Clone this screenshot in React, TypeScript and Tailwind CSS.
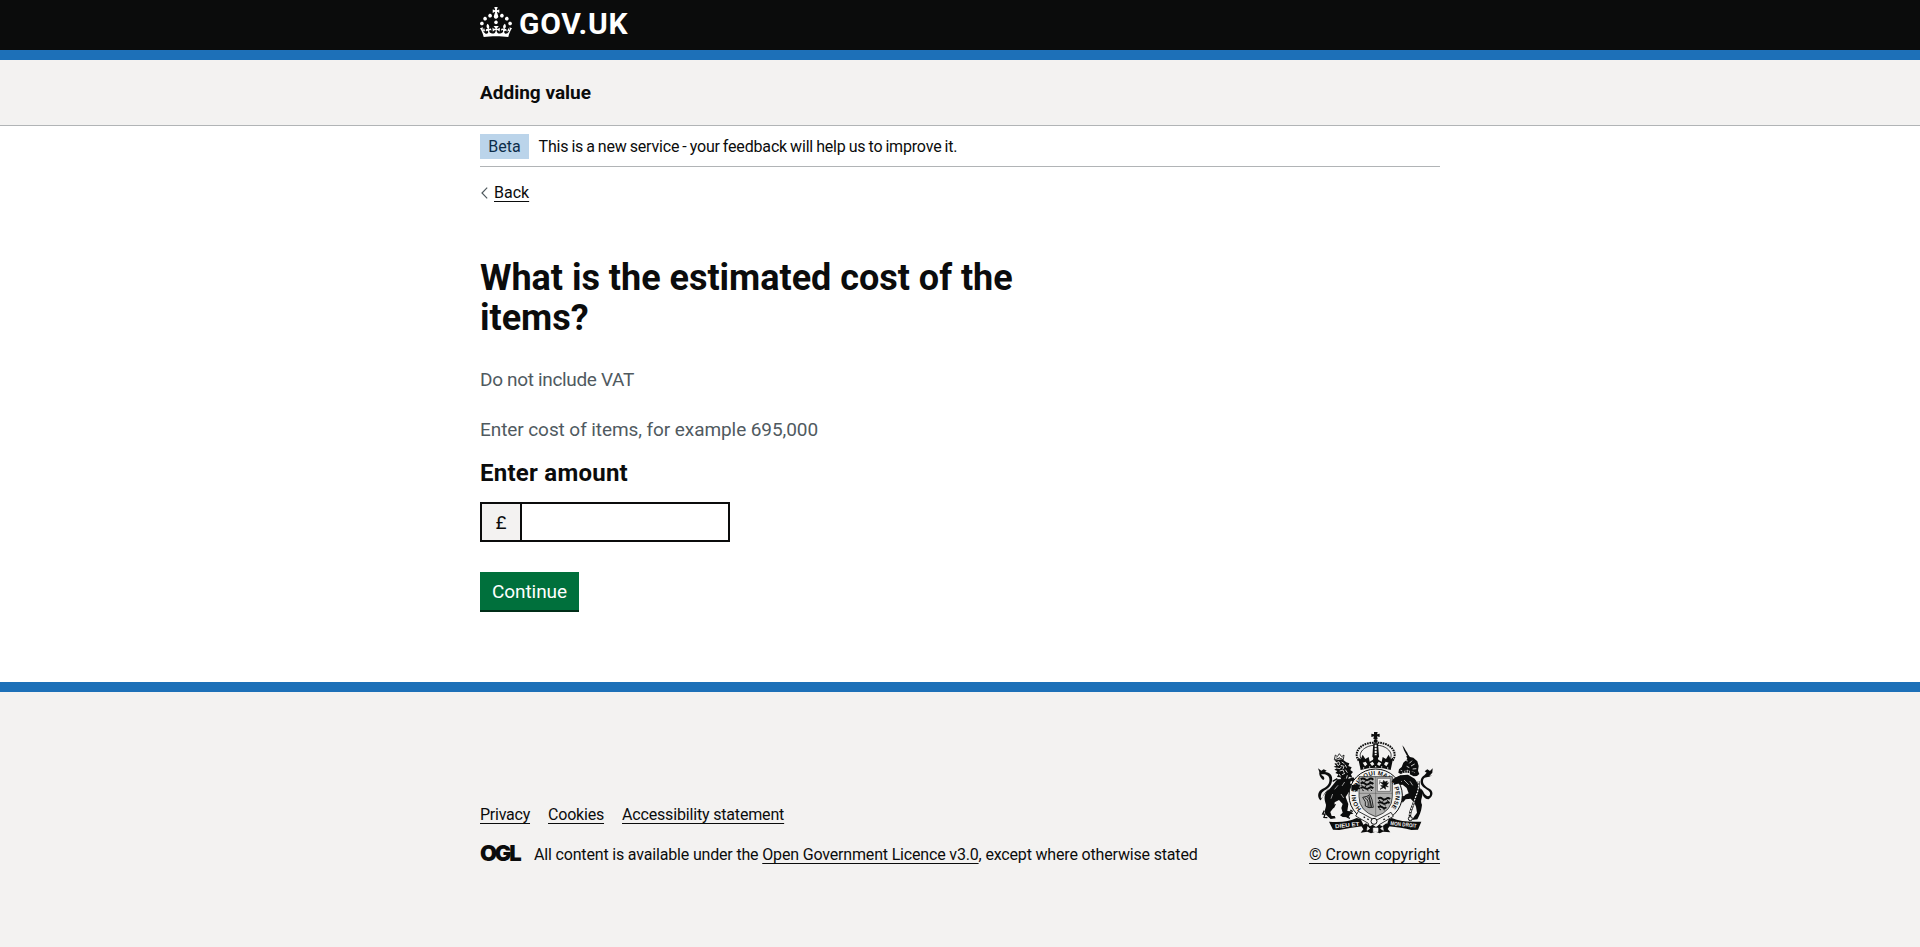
import type { ReactNode } from "react";

function HeaderCrown() {
  return (
    <svg viewBox="0 0 32 30" width="32" height="30" fill="currentColor" className="shrink-0">
      <path d="M22.6 10.4c-1 .4-2-.1-2.4-1-.4-.9.1-2 1-2.4.9-.4 2 .1 2.4 1s-.1 2-1 2.4m-5.9 6.7c-.9.4-2-.1-2.4-1-.4-.9.1-2 1-2.4.9-.4 2 .1 2.4 1s-.1 2-1 2.4m10.8-3.7c-1 .4-2-.1-2.4-1-.4-.9.1-2 1-2.4.9-.4 2 .1 2.4 1s0 2-1 2.4m3.3 4.8c-1 .4-2-.1-2.4-1-.4-.9.1-2 1-2.4.9-.4 2 .1 2.4 1s-.1 2-1 2.4M17 4.7l2.3 1.2V2.5l-2.3.7-.2-.2.9-3h-3.4l.9 3-.2.2c-.1.1-2.3-.7-2.3-.7v3.4L15 4.7c.1.1.1.2.2.2l-1.3 4c-.1.2-.1.4-.1.6 0 1.1.8 2 1.9 2.2h.7c1-.2 1.9-1.1 1.9-2.1 0-.2 0-.4-.1-.6l-1.3-4c-.1-.2 0-.2.1-.3m-7.6 5.7c.9.4 2-.1 2.4-1 .4-.9-.1-2-1-2.4-.9-.4-2 .1-2.4 1s0 2 1 2.4m-5 3c.9.4 2-.1 2.4-1 .4-.9-.1-2-1-2.4-.9-.4-2 .1-2.4 1s.1 2 1 2.4m-3.2 4.8c.9.4 2-.1 2.4-1 .4-.9-.1-2-1-2.4-.9-.4-2 .1-2.4 1s0 2 1 2.4m14.8 11c4.4 0 8.6.3 12.3.8 1.1-4.5 2.4-7 3.7-8.8l-2.5-.9c.2 1.3.3 1.9 0 2.7-.4-.4-.8-1.1-1.1-2.3l-1.2 4c.7-.5 1.3-.8 2-.9-1.1 2.5-2.6 3.1-3.5 3-1.1-.2-1.7-1.2-1.5-2.1.3-1.2 1.5-1.5 2.1-.1 1.1-2.3-.8-3-2-2.3 1.9-1.9 2.1-3.5.6-5.6-2.1 1.6-2.1 3.2-1.2 5.5-1.2-1.4-3.2-.6-2.5 1.6.9-1.4 2.1-.5 1.9.8-.2 1.1-1.7 2.1-3.5 1.9-2.7-.2-2.9-2.1-2.9-3.6.7-.1 1.9.5 2.9 1.9l.4-4.3c-1.1 1.1-2.1 1.4-3.2 1.4.4-1.2 2.1-3 2.1-3h-5.4s1.7 1.9 2.1 3c-1.1 0-2.1-.2-3.2-1.4l.4 4.3c1-1.4 2.2-2 2.9-1.9-.1 1.5-.2 3.4-2.9 3.6-1.9.2-3.4-.8-3.5-1.9-.2-1.3 1-2.2 1.9-.8.7-2.3-1.2-3-2.5-1.6.9-2.2.9-3.9-1.2-5.5-1.5 2-1.3 3.7.6 5.6-1.2-.7-3.1 0-2 2.3.6-1.4 1.8-1.1 2.1.1.2.9-.3 1.9-1.5 2.1-.9.2-2.4-.5-3.5-3 .6 0 1.2.3 2 .9l-1.2-4c-.3 1.1-.7 1.9-1.1 2.3-.3-.8-.2-1.4 0-2.7l-2.9.9C1.3 23 2.6 25.5 3.7 30c3.7-.5 7.9-.8 12.3-.8" />
    </svg>
  );
}

function RoyalArms() {
  const ink = "#0b0c0c";
  const paper = "#f3f2f1";
  return (
    <svg viewBox="75 30 360 318" width="120" height="106" fill={ink} stroke="none">
      <defs>
        <path id="garter" d="M214 267 A60 60 0 1 1 300 267" />
      </defs>

      {/* St Edward's crown */}
      <path d="M252 36h11l-2 7 8-2v10l-8-2 2 8h-13l2-8-8 2V41l8 2z" />
      <circle cx="257" cy="63" r="6" />
      <path d="M206 122C186 92 220 66 254 68" fill="none" stroke={ink} strokeWidth="6" strokeDasharray="5 2.5" />
      <path d="M308 122C328 92 294 66 260 68" fill="none" stroke={ink} strokeWidth="6" strokeDasharray="5 2.5" />
      <path d="M214 118C202 98 224 78 250 76M300 118C312 98 290 78 264 76" fill="none" stroke={ink} strokeWidth="2.5" />
      <path d="M250 70h14l3 40-10 12-10-12z" />
      <path d="M257 74v34" stroke={paper} strokeWidth="6" strokeDasharray="7 2" />
      <path d="M204 112l8 6 6-14 8 13 10-6 3 14 10-6 4-13h8l4 13 10 6 3-14 10 6 8-13 6 14 8-6-8 38q-45-14-90 0z" />
      <g fill={paper}>
        <path d="M218 128l9-3 5 8-7 6zM240 130l8-5 5 8-7 5zM274 130l-8-5-5 8 7 5zM296 128l-9-3-5 8 7 6z" />
        <circle cx="221" cy="144" r="2" /><circle cx="239" cy="141" r="2" /><circle cx="257" cy="140" r="2" /><circle cx="275" cy="141" r="2" /><circle cx="293" cy="144" r="2" />
      </g>

      {/* Lion */}
      <path d="M133 119l3-14 6 5 6-9 7 9 7-5-2 14q-14-5-27 0z" fill="none" stroke={ink} strokeWidth="2.5" />
      <path d="M139 113l5 4 4-5 5 5 5-4" fill="none" stroke={ink} strokeWidth="2" />
      <path d="M133 121l26-2 10 8 9 3-3 8 10 4-4 8 8 6-6 7 4 10-10-3-4 12-9-6-9 5-4-9-10-1 4-8-9-4 6-6-9-4 8-5-10-4 8-3-6-6 8-3z" />
      <path d="M139 128l8-3 3 7-6 5zM155 126l8 5M140 144l10 2 4-6M152 136l10 3-3 8M165 134l5 9M149 153l10-3 3 8M166 149l6 9M156 164l9-4M172 166l-3 10M147 162l5 7" fill="none" stroke={paper} strokeWidth="2.5" />
      <path d="M142 178C132 192 126 198 118 208C100 220 102 238 108 254C108 268 100 274 108 284L122 297L137 295L134 288L125 288L121 276L132 262L134 247L147 240L158 252L154 264L158 278L150 286L158 291L176 292L181 283L190 281L182 274L172 273L175 252L167 231L178 214L188 217L195 209L205 215L211 206L203 199L192 200L180 190L183 182L194 190L205 192L208 184L197 182L190 172L176 176Z" />
      <path d="M118 205C96 222 96 245 90 240C80 228 84 212 98 206C112 200 120 190 118 176C117 166 104 160 93 164C103 169 106 176 100 180C94 176 86 166 88 156L84 145L94 152L101 148L110 152L105 156C120 156 129 168 126 182C124 199 112 206 102 212C92 219 92 228 93 236Z" />
      <path d="M103 272l-5 10 7 1-3 9 10 1M181 270l7 5M170 291l10 4M128 184l14-8M136 252l-6 12" fill="none" stroke={ink} strokeWidth="4" />
      <path d="M144 196l-10 12M164 186l-8 12M128 222l-5 14M153 222l8 12" stroke={paper} strokeWidth="1.8" />

      {/* Unicorn */}
      <path d="M337 76L343 83L347 91L352 98L356 108L350 106L346 98L342 91Z" />
      <path d="M354 104l6 7 10 2 12 11 4 14-2 14 4 10-7 6-10 1-12-6 3-9-10-5-10 4-10 9-7-4 2-10 8-7 5-13 12-11-3-8z" />
      <path d="M346 121l7 2M366 122l-8 8M374 132l-11 6M379 146l-11 1M332 151l5 2M350 139l8 4M374 158l-9-3" stroke={paper} strokeWidth="2.5" />
      <path d="M332 158q24-10 48 8" fill="none" stroke={ink} strokeWidth="7" strokeDasharray="5 2" />
      <path d="M332 166L354 164L374 176C384 188 385 202 397 214C401 230 388 240 396 254C394 270 392 280 382 298L366 300L372 290L381 278L378 260L373 248L362 236L347 238L338 248L334 238L346 224L356 220L350 204L338 194L329 195L319 206L309 207L314 196L309 187L310 176Z" />
      <path d="M340 228l-10 18" fill="none" stroke={ink} strokeWidth="6" />
      <path d="M342 180l14 14M360 184l8 12M326 181l10 4" stroke={paper} strokeWidth="2" />
      <path d="M386 184C388 214 376 228 372 246C368 262 358 276 360 290" fill="none" stroke={ink} strokeWidth="7" />
      <path d="M386 184C388 214 376 228 372 246C368 262 358 276 360 290" fill="none" stroke={paper} strokeWidth="3.5" strokeDasharray="6 3" />
      <path d="M391 211C400 222 398 238 416 238C433 226 430 210 414 204C404 198 396 190 400 178C404 170 414 174 427 166L418 168L427 158L428 145L420 153L412 148L404 154L410 158L403 166C390 173 390 189 395 196C402 206 417 210 420 218C422 228 414 232 408 226C400 220 401 212 391 205Z" />

      {/* Garter */}
      <ellipse cx="257" cy="226" rx="80" ry="79" fill={paper} stroke={ink} strokeWidth="3" />
      <text fontFamily="Liberation Sans, sans-serif" fontSize="18" fontWeight="700" letterSpacing="0.8">
        <textPath href="#garter">HONI SOIT QUI MAL Y PENSE</textPath>
      </text>

      {/* Quartered shield */}
      <path d="M207 170h100v60q0 43-50 60q-50-17-50-60z" fill="#b1b1b0" stroke={ink} strokeWidth="2" />
      <path d="M262 175h39v39h-39z" fill={paper} stroke="#505050" strokeWidth="2" />
      <path d="M212 178q7-5 13 0t12 0t13 1M212 191q7-5 13 0t12 0t13 1M212 204q7-5 13 0t12 0t13 1M264 236q7-5 13 0t12 0t11 1M264 249q7-5 13 0t12 0t9 1M264 262q7-5 13 0t12 0" fill="none" stroke={ink} strokeWidth="6" />
      <path d="M214 182l5 5M227 181l-3 6M238 183l6 4M214 196l6 4M229 195l-3 6M240 196l5 5M216 209l5 3M230 208l5 4M242 209l4 4M267 240l5 4M281 240l-3 5M291 241l5 4M268 254l5 3M282 253l4 4M267 266l6 4M281 266l2 5" fill="none" stroke={ink} strokeWidth="3" />
      <path d="M270 208l8-7-6-4 9-1-10-9 7 1 3-7 4 5 7-3-2 7 6-2-6 8 5 5-9-2 1 9-6-5zM270 180l-2 13" fill={ink} stroke={ink} strokeWidth="1.5" />
      <path d="M218 232q14-2 22-8q7 12 10 38q-14 4-24-4q4-12-8-26zM224 233q14 6 10 29M231 230q12 9 9 33M237 228l8 33" fill="none" stroke={ink} strokeWidth="2.5" />
      <path d="M257 170v120M207 220h100" stroke="#505050" strokeWidth="1.5" />

      {/* Lion and unicorn paws over the shield */}
      <path d="M184 196l17-4 11 5-6 4 7 6-9 1-2 7-9-5-9 3zM332 166l-22 10-6 11 9-1-2 9 9-3 14-2z" />

      {/* Buckle */}
      <path d="M205 274l52 28 46-25 7 12-42 25-10 16-20-4-3-16-38-22z" fill={paper} stroke={ink} strokeWidth="2.5" />
      <circle cx="252" cy="304" r="9" fill={paper} stroke={ink} strokeWidth="3" />
      <path d="M221 290l4 3M232 296l4 3M280 299l5-2M294 291l4-2" stroke={ink} strokeWidth="4" />

      {/* Plant badges */}
      <path d="M214 318l14-8 12 9 8-5 10 7 10-7 9 5 12-9 10 8-6 9 8 10-22-2-10 5-12-5-14 5-11-5-20 3 8-10z" />
      <path d="M233 320l6 6-8 5zM278 320l-6 6 8 5zM250 324h14v11h-14z" fill={paper} stroke={paper} strokeWidth="2" />

      {/* Motto scrolls */}
      <path d="M117 305Q168 310 200 294L212 297L221 316L216 319Q178 324 148 330L129 329Z" />
      <path d="M394 305Q340 308 305 294L296 298L290 316L296 319Q335 323 364 330L384 329Z" />
      <circle cx="361" cy="296" r="6" fill={paper} stroke={ink} strokeWidth="3" />
      <g fontFamily="Liberation Sans, sans-serif" fontSize="17" fontWeight="700" fill={paper}>
        <text x="136" y="325" transform="rotate(-6 136 325)" textLength="73" lengthAdjust="spacingAndGlyphs">DIEU ET</text>
        <text x="301" y="315" transform="rotate(6 301 315)" textLength="78" lengthAdjust="spacingAndGlyphs">MON DROIT</text>
      </g>
    </svg>
  );
}

function Link({ children, className = "" }: { children: ReactNode; className?: string }) {
  return (
    <a href="#" className={`underline decoration-1 underline-offset-[2.5px] ${className}`}>
      {children}
    </a>
  );
}

export default function App() {
  return (
    <div className="flex min-h-[947px] flex-col bg-white font-['Roboto',sans-serif] text-[#0b0c0c]">
      <header>
        <div className="h-[50px] bg-[#0b0c0c] text-white">
          <div className="mx-auto flex w-[960px] gap-[7px] pt-[7px]">
            <HeaderCrown />
            <span className="text-[30px] leading-[33px] font-bold tracking-[0.75px]">GOV.UK</span>
          </div>
        </div>
        <div className="h-2.5 bg-[#1d70b8]" />
        <div className="h-[66px] border-b border-[#b1b4b6] bg-[#f3f2f1]">
          <div className="mx-auto flex h-full w-[960px] items-center pt-0.5 text-[19px] font-bold">
            Adding value
          </div>
        </div>
      </header>

      <div className="mx-auto w-[960px]">
        <div className="flex items-center gap-[9.5px] border-b border-[#b1b4b6] pt-2 pb-[7px] text-base">
          <strong className="flex h-[25px] w-[49px] items-center justify-center bg-[#bbd4ea] font-normal text-[#0c2d4a]">
            Beta
          </strong>
          <span className="tracking-[-0.17px] [word-spacing:-0.75px]">
            This is a new service - your feedback will help us to improve it.
          </span>
        </div>

        <div className="flex items-center pt-[15px] text-base leading-[21px]">
          <svg width="14" height="12" viewBox="0 0 14 12" fill="none" stroke="#505a5f" strokeWidth="1.2">
            <path d="M7.2.7 2 6l5.2 5.3" />
          </svg>
          <Link>Back</Link>
        </div>

        <main className="w-[630px] pb-[70px]">
          <h1 className="mt-[55px] text-4xl leading-10 font-bold tracking-[-0.02px]">
            What is the estimated cost of the
            <br />
            items?
          </h1>
          <p className="mt-[29px] text-[19px] leading-[25px] tracking-[-0.33px] text-[#505a5f]">Do not include VAT</p>
          <p className="mt-[25px] text-[19px] leading-[25px] tracking-[-0.08px] text-[#505a5f]">
            Enter cost of items, for example 695,000
          </p>
          <label htmlFor="amount" className="mt-4 block text-2xl leading-[30px] font-bold tracking-[0.25px]">
            Enter amount
          </label>
          <div className="mt-3.5 flex h-10">
            <div className="flex w-10 items-center justify-center border-2 border-r-0 border-[#0b0c0c] bg-[#f3f2f1] pt-0.5 text-[19px]">
              £
            </div>
            <input id="amount" className="w-[210px] border-2 border-[#0b0c0c] bg-white px-1 text-[19px] outline-none" />
          </div>
          <button className="mt-[30px] flex h-10 w-[99px] items-center justify-center border-b-2 border-[#002d18] bg-[#00703c] pt-0.5 text-[19px] tracking-[-0.08px] text-white">
            Continue
          </button>
        </main>
      </div>

      <footer className="grow border-t-10 border-[#1d70b8] bg-[#f3f2f1] text-base leading-5">
        <div className="mx-auto flex w-[960px] items-end justify-between pt-[38px]">
          <div>
            <div className="flex gap-[18px]">
              <Link className="tracking-[-0.24px]">Privacy</Link>
              <Link className="tracking-[-0.2px]">Cookies</Link>
              <Link className="tracking-[-0.17px]">Accessibility statement</Link>
            </div>
            <div className="mt-5 flex">
              <span className="relative -top-0.5 w-[54px] font-['Inter',sans-serif] text-[22px] font-black tracking-[-2.2px]">
                OGL
              </span>
              <span className="tracking-[-0.17px]">
                All content is available under the <Link>Open Government Licence v3.0</Link>, except where otherwise
                stated
              </span>
            </div>
          </div>
          <div className="flex flex-col items-end gap-[9px]">
            <div className="pr-[5px]">
              <RoyalArms />
            </div>
            <Link className="tracking-[-0.09px]">© Crown copyright</Link>
          </div>
        </div>
      </footer>
    </div>
  );
}
